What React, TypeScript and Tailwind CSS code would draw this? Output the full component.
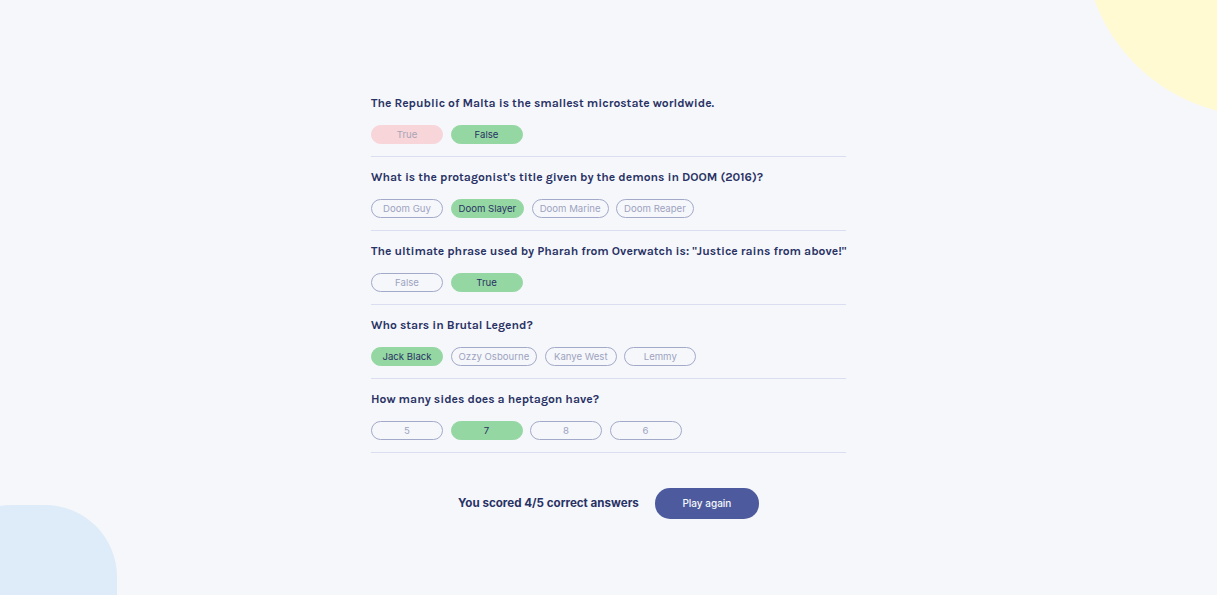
import React from "react";

type Answer = { text: string; state: "correct" | "wrong" | "idle" };
type Question = { q: string; answers: Answer[] };

const questions: Question[] = [
    {
        q: "The Republic of Malta is the smallest microstate worldwide.",
        answers: [
            { text: "True", state: "wrong" },
            { text: "False", state: "correct" },
        ],
    },
    {
        q: "What is the protagonist's title given by the demons in DOOM (2016)?",
        answers: [
            { text: "Doom Guy", state: "idle" },
            { text: "Doom Slayer", state: "correct" },
            { text: "Doom Marine", state: "idle" },
            { text: "Doom Reaper", state: "idle" },
        ],
    },
    {
        q: 'The ultimate phrase used by Pharah from Overwatch is: "Justice rains from above!"',
        answers: [
            { text: "False", state: "idle" },
            { text: "True", state: "correct" },
        ],
    },
    {
        q: "Who stars in Brutal Legend?",
        answers: [
            { text: "Jack Black", state: "correct" },
            { text: "Ozzy Osbourne", state: "idle" },
            { text: "Kanye West", state: "idle" },
            { text: "Lemmy", state: "idle" },
        ],
    },
    {
        q: "How many sides does a heptagon have?",
        answers: [
            { text: "5", state: "idle" },
            { text: "7", state: "correct" },
            { text: "8", state: "idle" },
            { text: "6", state: "idle" },
        ],
    },
];

const AnswerPill: React.FC<{ answer: Answer }> = ({ answer }) => {
    const base =
        "flex h-[19px] min-w-[72px] items-center justify-center rounded-full px-[7px] text-[9.6px] leading-none font-['Inter',sans-serif]";
    if (answer.state === "correct") {
        return (
            <div className={`${base} border border-[#94D7A2] bg-[#94D7A2] text-[#293264]`}>
                {answer.text}
            </div>
        );
    }
    if (answer.state === "wrong") {
        return (
            <div className={`${base} border border-[#F8D5D9] bg-[#F8D5D9] text-[#a9a4b6]`}>
                {answer.text}
            </div>
        );
    }
    return (
        <div className={`${base} border-[0.8px] border-[#a3a9c9] text-[#9ea3bf]`}>
            {answer.text}
        </div>
    );
};

export default function App() {
    return (
        <div className="relative min-h-screen overflow-hidden bg-[#F5F7FB] font-['Inter',sans-serif]">
            {/* decorative blobs */}
            <div className="absolute top-[-236px] left-[1084px] h-[352px] w-[352px] rounded-full bg-[#FFFAD1]" />
            <div className="absolute top-[505px] left-[-60px] h-[220px] w-[177px] rounded-[72px] bg-[#DEEBF8]" />

            <div className="relative mx-auto w-[475px] pt-[95px]">
                {questions.map((item, i) => (
                    <div key={i} className="mb-3 border-b border-[#DBDEF0] pb-3">
                        <h2 className="whitespace-nowrap text-[12.1px] leading-4 font-bold text-[#293264] font-['Karla','Lato',sans-serif]">
                            {item.q}
                        </h2>
                        <div className="mt-[14px] flex gap-[7.5px]">
                            {item.answers.map((a, j) => (
                                <AnswerPill key={j} answer={a} />
                            ))}
                        </div>
                    </div>
                ))}

                <div className="mt-[35px] flex items-center justify-center gap-4">
                    <p className="text-[11.6px] font-bold text-[#293264]">You scored 4/5 correct answers</p>
                    <button className="h-[31px] w-[104px] rounded-[15px] bg-[#4D5B9E] text-[10px] font-medium text-[#F5F7FB]">
                        Play again
                    </button>
                </div>
            </div>
        </div>
    );
}
